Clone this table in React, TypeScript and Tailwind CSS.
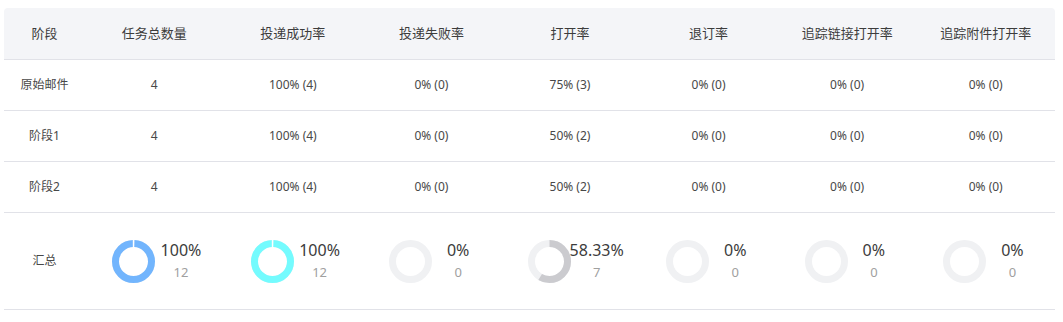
import React from "react";

const headers = ["阶段", "任务总数量", "投递成功率", "投递失败率", "打开率", "退订率", "追踪链接打开率", "追踪附件打开率"];

const rows = [
  ["原始邮件", "4", "100% (4)", "0% (0)", "75% (3)", "0% (0)", "0% (0)", "0% (0)"],
  ["阶段1", "4", "100% (4)", "0% (0)", "50% (2)", "0% (0)", "0% (0)", "0% (0)"],
  ["阶段2", "4", "100% (4)", "0% (0)", "50% (2)", "0% (0)", "0% (0)", "0% (0)"],
];

const summary = [
  { pct: 1, label: "100%", count: "12", color: "#72b5fd" },
  { pct: 1, label: "100%", count: "12", color: "#74fbfe" },
  { pct: 0, label: "0%", count: "0", color: "#f0f1f3" },
  { pct: 0.5833, label: "58.33%", count: "7", color: "#cbcbcf" },
  { pct: 0, label: "0%", count: "0", color: "#f0f1f3" },
  { pct: 0, label: "0%", count: "0", color: "#f0f1f3" },
  { pct: 0, label: "0%", count: "0", color: "#f0f1f3" },
];

function Donut({ pct, color }: { pct: number; color: string }) {
  const r = 18;
  const c = 2 * Math.PI * r;
  const len = pct >= 1 ? c - 1.5 : c * pct;
  return (
    <svg width="43" height="43" viewBox="0 0 43 43" className="shrink-0">
      <circle cx="21.5" cy="21.5" r={r} fill="none" stroke="#f0f1f3" strokeWidth="7" />
      {pct > 0 && (
        <circle
          cx="21.5"
          cy="21.5"
          r={r}
          fill="none"
          stroke={color}
          strokeWidth="7"
          strokeDasharray={`${len} ${c - len}`}
          strokeDashoffset={pct >= 1 ? -0.75 : 0}
          transform="rotate(-90 21.5 21.5)"
        />
      )}
      {pct >= 1 && <rect x="20.8" y="0" width="1.4" height="8" fill="#ffffff" />}
    </svg>
  );
}

export default function App() {
  return (
    <div className="w-[1063px] h-[322px] bg-white pt-2 pl-1 pr-2" style={{ fontFamily: '"Noto Sans", "Noto Sans CJK SC", sans-serif' }}>
      <div className="grid grid-cols-[81px_repeat(7,1fr)] text-[12px] text-[#484848]">
        {headers.map((h, i) => (
          <div
            key={h}
            className={`h-[52px] bg-[#f4f5f8] border-b border-[#e1e2e8] flex items-center justify-center text-[13px] text-[#3c3c3c] ${i === 0 ? "rounded-tl" : ""} ${i === 7 ? "rounded-tr" : ""}`}
          >
            {h}
          </div>
        ))}
        {rows.map((row, ri) =>
          row.map((cell, ci) => (
            <div key={ri + "-" + ci} className="h-[51px] border-b border-[#e1e2e8] flex items-center justify-center">
              {cell}
            </div>
          ))
        )}
        <div className="h-[97px] border-b border-[#e1e2e8] flex items-center justify-center">汇总</div>
        {summary.map((s, i) => (
          <div key={i} className="h-[97px] border-b border-[#e1e2e8] flex items-center pl-[27px]">
            <Donut pct={s.pct} color={s.color} />
            <div className="w-[52px] flex flex-col items-center">
              <span className="text-[16px] leading-[22px] text-[#3c3c3c]">{s.label}</span>
              <span className="text-[13px] leading-[22px] text-[#a0a0a0]">{s.count}</span>
            </div>
          </div>
        ))}
      </div>
    </div>
  );
}
